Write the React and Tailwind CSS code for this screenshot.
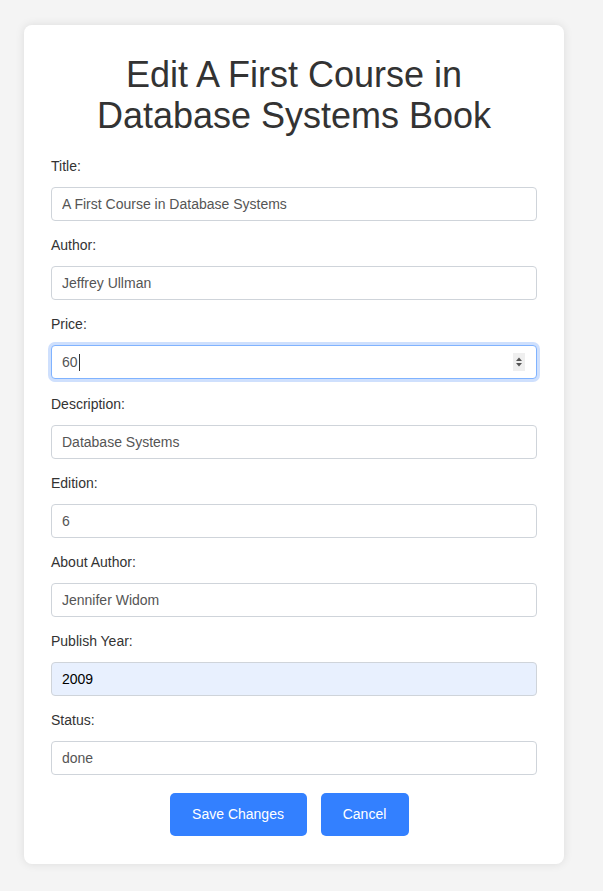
const fields = [
  { label: "Title:", value: "A First Course in Database Systems" },
  { label: "Author:", value: "Jeffrey Ullman" },
  { label: "Price:", value: "60", focused: true },
  { label: "Description:", value: "Database Systems" },
  { label: "Edition:", value: "6" },
  { label: "About Author:", value: "Jennifer Widom" },
  { label: "Publish Year:", value: "2009", autofill: true },
  { label: "Status:", value: "done" }
];

function Field({ label, value, focused, autofill }) {
  return (
    <div className="mb-[16.2px]">
      <label className="block text-[14px] leading-[16px] text-[#333] mb-[13px]">{label}</label>
      {focused ? (
        <div className="relative h-[34px] rounded-[4px] border border-[#80b3ff] bg-white ring-[3px] ring-[#cfe0fd] flex items-center px-[10px]">
          <span className="text-[14px] text-[#555]">{value}</span>
          <span className="ml-[1px] h-[17px] w-px bg-[#333]" />
          <div className="absolute right-[11px] top-[7px] flex h-[18px] w-[12px] flex-col items-center justify-center bg-[#efefef]">
            <svg width="8" height="12" viewBox="0 0 8 12">
              <path d="M4 1.5 L7 5 H1 Z" fill="#555" />
              <path d="M4 10.5 L7 7 H1 Z" fill="#555" />
            </svg>
          </div>
        </div>
      ) : (
        <input
          readOnly
          defaultValue={value}
          className={`block w-full h-[34px] rounded-[4px] border border-[#cfd4da] px-[10px] text-[14px] outline-none ${autofill ? "bg-[#e8f0fe] text-black" : "bg-white text-[#555]"}`}
        />
      )}
    </div>
  );
}

export default function App() {
  return (
    <div className="min-h-[891px] bg-[#f4f4f4] pt-[25px] pb-[28px] px-[24px]" style={{ fontFamily: "'Liberation Sans', Arial, sans-serif" }}>
      <div className="w-[540px] rounded-[8px] bg-white px-[27px] pt-[29px] pb-[28px] shadow-[0_0_10px_rgba(0,0,0,0.1)]">
        <h1 className="text-center text-[36px] leading-[41px] text-[#333] mb-[22px]">
          Edit A First Course in Database Systems Book
        </h1>
        <form>
          {fields.map((f) => (
            <Field key={f.label} {...f} />
          ))}
          <div className="flex justify-center gap-[14px] pt-[1.5px]">
            <button type="button" className="h-[43px] w-[137px] rounded-[5px] bg-[#3380ff] text-[14px] text-white">Save Changes</button>
            <button type="button" className="mr-[10px] h-[43px] w-[88px] rounded-[5px] bg-[#3380ff] text-[14px] text-white">Cancel</button>
          </div>
        </form>
      </div>
    </div>
  );
}
